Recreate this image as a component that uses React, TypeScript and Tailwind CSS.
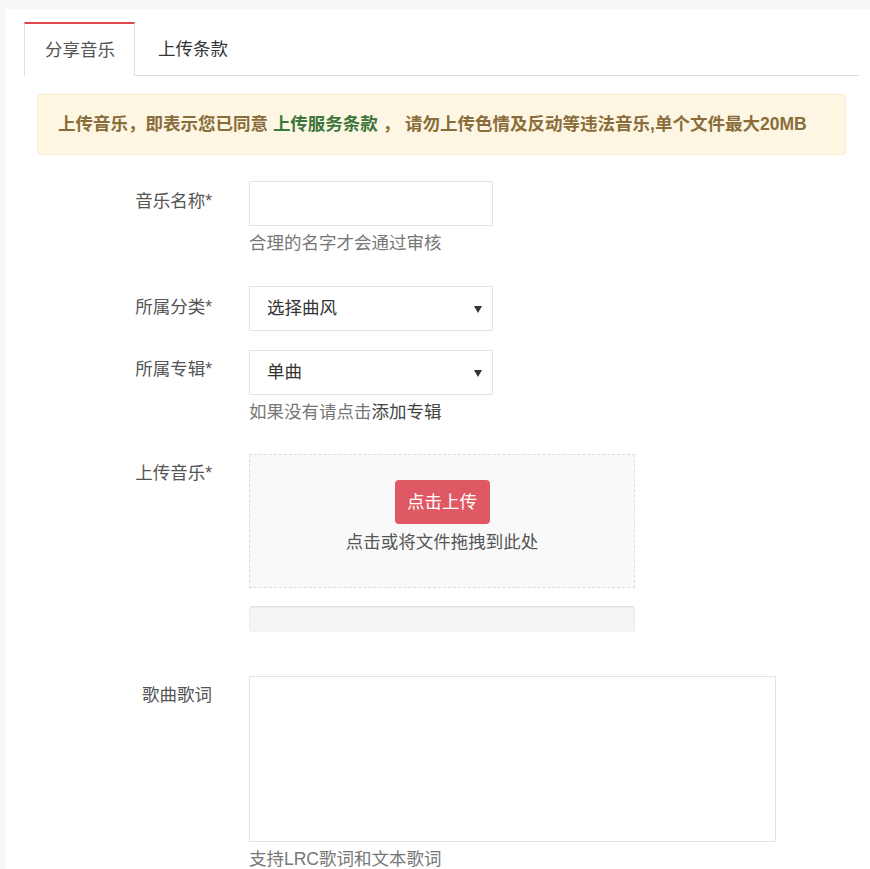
import React from "react";

const font = { fontFamily: '"Liberation Sans", "Noto Sans CJK SC", sans-serif' };

const Arrow = () => (
  <svg width="8" height="8" viewBox="0 0 8 8" className="absolute right-[10px] top-1/2 -translate-y-1/2">
    <polygon points="0,1 8,1 4,8" fill="#333" />
  </svg>
);

const Label = ({ text, pt = "pt-[7px]" }: { text: string; pt?: string }) => (
  <div className={`w-[188px] shrink-0 text-right ${pt} leading-[24px] text-[#555]`}>{text}</div>
);

const Help = ({ children }: { children: React.ReactNode }) => (
  <p className="mt-[5px] leading-[24px] text-[#777]">{children}</p>
);

export default function App() {
  return (
    <div className="min-h-[869px] bg-[#f7f7f7] pt-[9px] pl-[6px] text-[17.5px]" style={font}>
      <div className="min-h-[860px] bg-white pt-[13px] pl-[18px] pr-[11px]">
        {/* tabs */}
        <div className="flex border-b border-[#ddd] h-[54px]">
          <div className="-mb-px flex items-center border-x border-t-2 border-x-[#ddd] border-t-[#e0474c] bg-white pl-[20px] pr-[19px] pt-[1px] text-[#555]">
            分享音乐
          </div>
          <div className="ml-[2px] flex items-center px-[21px] pt-[2px] text-[#333]">上传条款</div>
        </div>

        <div className="px-[13px]">
          <div className="mt-[18px] flex h-[61px] items-center rounded-[4px] border border-[#faebcc] bg-[#fcf6e3] px-[20px] font-bold text-[#8a6d3b]">
            上传音乐，即表示您已同意&nbsp;<span className="text-[#3c763d]">上传服务条款</span>&nbsp;，&nbsp;请勿上传色情及反动等违法音乐,单个文件最大20MB
          </div>
        </div>

        <div className="mt-[26px]">
          <div className="flex gap-[37px]">
            <Label text="音乐名称*" pt="pt-[8px]" />
            <div>
              <div className="h-[45px] w-[244px] border border-[#e3e3e3]" />
              <Help>合理的名字才会通过审核</Help>
            </div>
          </div>

          <div className="mt-[31px] flex gap-[37px]">
            <Label text="所属分类*" pt="pt-[9px]" />
            <div className="relative flex h-[45px] w-[244px] items-center border border-[#e3e3e3] pl-[17px] text-[#333]">
              选择曲风
              <Arrow />
            </div>
          </div>

          <div className="mt-[19px] flex gap-[37px]">
            <Label text="所属专辑*" />
            <div>
              <div className="relative flex h-[45px] w-[244px] items-center border border-[#e3e3e3] pl-[17px] text-[#333]">
                单曲
                <Arrow />
              </div>
              <Help>
                如果没有请点击<span className="text-[#444]">添加专辑</span>
              </Help>
            </div>
          </div>

          <div className="mt-[30px] flex gap-[37px]">
            <Label text="上传音乐*" />
            <div>
              <div className="flex h-[134px] w-[386px] flex-col items-center border border-dashed border-[#ddd] bg-[#f9f9f9] pt-[25px]">
                <button className="h-[44px] w-[95px] rounded-[4px] bg-[#df5964] text-white">点击上传</button>
                <p className="mt-[4px] leading-[28px] text-[#555]">点击或将文件拖拽到此处</p>
              </div>
              <div className="mt-[18px] h-[26px] w-[386px] rounded-[4px] bg-[#f4f4f4] shadow-[inset_0_1px_2px_rgba(0,0,0,0.1)]" />
            </div>
          </div>

          <div className="mt-[44px] flex gap-[37px]">
            <Label text="歌曲歌词" />
            <div>
              <div className="h-[166px] w-[527px] border border-[#e3e3e3]" />
              <Help>支持LRC歌词和文本歌词</Help>
            </div>
          </div>
        </div>
      </div>
    </div>
  );
}
